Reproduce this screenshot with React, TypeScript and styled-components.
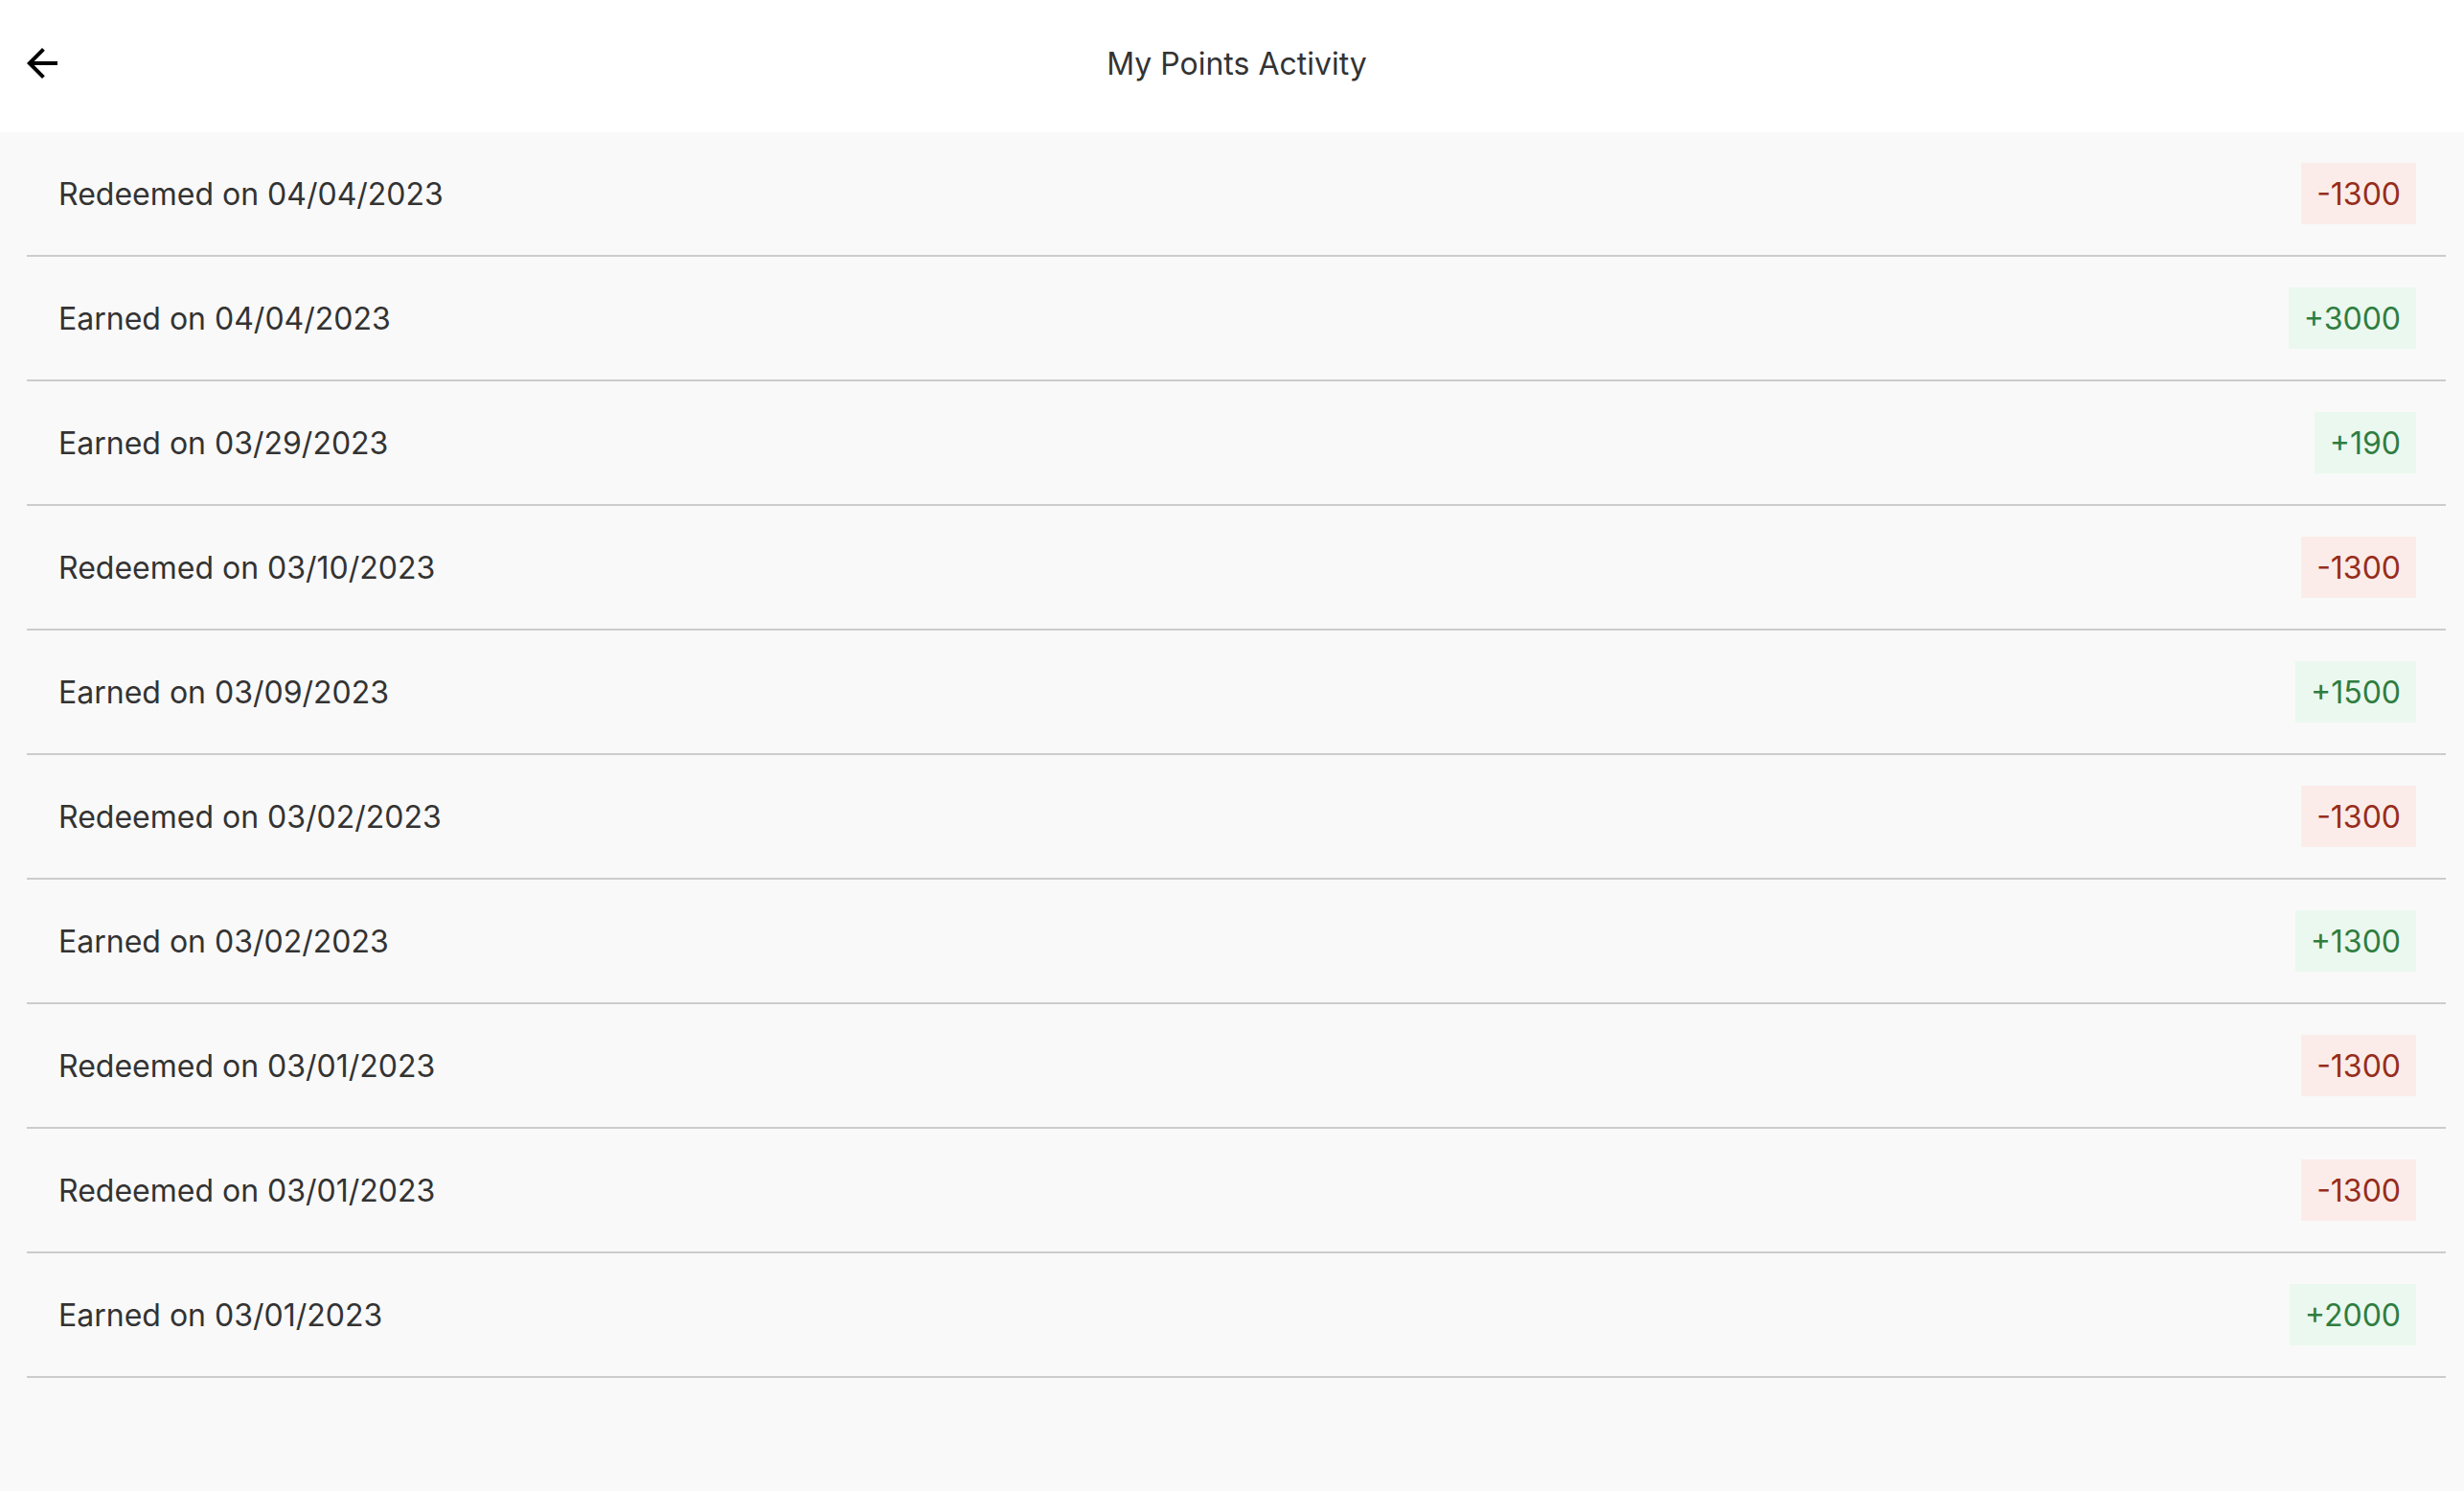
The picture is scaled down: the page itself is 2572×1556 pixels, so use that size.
import React from "react";
import styled, { createGlobalStyle } from "styled-components";

const GlobalStyle = createGlobalStyle`
  html, body {
    margin: 0;
    padding: 0;
    background: #f9f9f9;
    font-family: Inter, "Noto Sans", "Liberation Sans", sans-serif;
  }
  * { box-sizing: border-box; }
`;

const Page = styled.div`
  min-height: 100vh;
  display: flex;
  flex-direction: column;
  background: #f9f9f9;
`;

const Header = styled.header`
  height: 138px;
  background: #ffffff;
  display: grid;
  grid-template-columns: 1fr auto 1fr;
  align-items: center;
  padding: 0 10px 6px 20px;
`;

const BackButton = styled.button`
  justify-self: start;
  width: 48px;
  height: 48px;
  padding: 0;
  border: none;
  background: transparent;
  display: flex;
  align-items: center;
  justify-content: center;
  cursor: pointer;
  color: #000;
`;

const Title = styled.h1`
  margin: 0;
  font-size: 32px;
  font-weight: 400;
  color: #333333;
  letter-spacing: 0;
`;

const List = styled.ul`
  list-style: none;
  margin: 0 19px 0 28px;
  padding: 0;
`;

const Row = styled.li`
  height: 130px;
  border-bottom: 2px solid #cccccc;
  display: flex;
  align-items: center;
  justify-content: space-between;
  padding: 0 31px 0 33px;
`;

const Label = styled.span`
  font-size: 32px;
  color: #333333;
`;

const Badge = styled.span<{ $positive: boolean }>`
  height: 64px;
  padding: 0 16px;
  display: flex;
  align-items: center;
  font-size: 32px;
  color: ${(p) => (p.$positive ? "#2f7d3f" : "#962d1b")};
  background: ${(p) => (p.$positive ? "#ebf8ef" : "#fbece9")};
`;

const BackIcon = () => (
  <svg width="48" height="48" viewBox="0 0 24 24" fill="currentColor" aria-hidden="true">
    <path d="M20 11H7.83l5.59-5.59L12 4l-8 8 8 8 1.41-1.41L7.83 13H20v-2z" />
  </svg>
);

type Entry = { kind: "Redeemed" | "Earned"; date: string; points: number };

const entries: Entry[] = [
  { kind: "Redeemed", date: "04/04/2023", points: -1300 },
  { kind: "Earned", date: "04/04/2023", points: 3000 },
  { kind: "Earned", date: "03/29/2023", points: 190 },
  { kind: "Redeemed", date: "03/10/2023", points: -1300 },
  { kind: "Earned", date: "03/09/2023", points: 1500 },
  { kind: "Redeemed", date: "03/02/2023", points: -1300 },
  { kind: "Earned", date: "03/02/2023", points: 1300 },
  { kind: "Redeemed", date: "03/01/2023", points: -1300 },
  { kind: "Redeemed", date: "03/01/2023", points: -1300 },
  { kind: "Earned", date: "03/01/2023", points: 2000 },
];

export default function App() {
  return (
    <Page>
      <GlobalStyle />
      <Header>
        <BackButton aria-label="Back">
          <BackIcon />
        </BackButton>
        <Title>My Points Activity</Title>
        <span />
      </Header>
      <List>
        {entries.map((e, i) => (
          <Row key={i}>
            <Label>
              {e.kind} on {e.date}
            </Label>
            <Badge $positive={e.points > 0}>
              {e.points > 0 ? `+${e.points}` : `${e.points}`}
            </Badge>
          </Row>
        ))}
      </List>
    </Page>
  );
}
